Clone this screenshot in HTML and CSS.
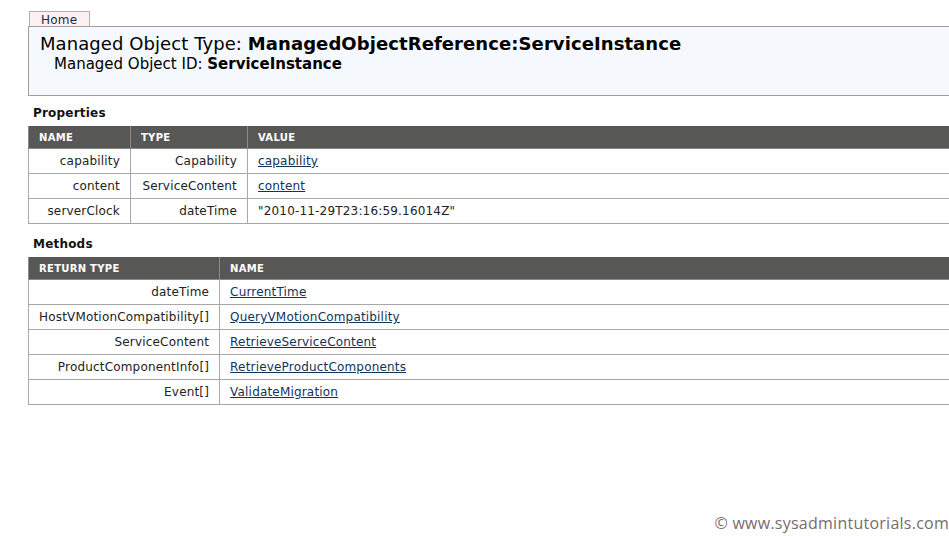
FILE: index.html
```html
<!DOCTYPE html>
<html>
<head>
<meta charset="utf-8">
<link rel="stylesheet" href="styles.css">
</head>
<body>
<div class="page">
  <div class="tabs"><a class="tab" href="#">Home</a></div>
  <div class="header">
    <div class="title">Managed Object Type: <b>ManagedObjectReference:ServiceInstance</b></div>
    <div class="subtitle">Managed Object ID: <b>ServiceInstance</b></div>
  </div>

  <h2 class="section">Properties</h2>
  <table class="grid props">
    <thead>
      <tr><th class="c-name">NAME</th><th class="c-type">TYPE</th><th>VALUE</th></tr>
    </thead>
    <tbody>
      <tr><td class="r">capability</td><td class="r">Capability</td><td><a href="#">capability</a></td></tr>
      <tr><td class="r">content</td><td class="r">ServiceContent</td><td><a href="#">content</a></td></tr>
      <tr><td class="r">serverClock</td><td class="r">dateTime</td><td>"2010-11-29T23:16:59.16014Z"</td></tr>
    </tbody>
  </table>

  <h2 class="section">Methods</h2>
  <table class="grid methods">
    <thead>
      <tr><th class="c-ret">RETURN TYPE</th><th>NAME</th></tr>
    </thead>
    <tbody>
      <tr><td class="r">dateTime</td><td><a href="#">CurrentTime</a></td></tr>
      <tr><td class="r">HostVMotionCompatibility[]</td><td><a href="#">QueryVMotionCompatibility</a></td></tr>
      <tr><td class="r">ServiceContent</td><td><a href="#">RetrieveServiceContent</a></td></tr>
      <tr><td class="r">ProductComponentInfo[]</td><td><a href="#">RetrieveProductComponents</a></td></tr>
      <tr><td class="r">Event[]</td><td><a href="#">ValidateMigration</a></td></tr>
    </tbody>
  </table>
</div>
<div class="watermark">© www.sysadmintutorials.com</div>
</body>
</html>
```

FILE: styles.css
```css
html, body {
  margin: 0;
  padding: 0;
  overflow: hidden;
  background: #ffffff;
}
body {
  font-family: "DejaVu Sans", Verdana, sans-serif;
  color: #111;
  width: 949px;
  height: 536px;
  position: relative;
}
.page {
  padding: 11px 0 0 28px;
  width: 960px;
}
.tabs {
  display: flex;
  padding-left: 1px;
}
.tab {
  display: block;
  width: 48px;
  height: 14px;
  padding: 0 0 0 11px;
  font-size: 12px;
  line-height: 16px;
  letter-spacing: 0.2px;
  color: #1a2a44;
  text-decoration: none;
  background: #fcf0f1;
  border: 1px solid #b0b0b0;
  border-bottom: none;
}
.header {
  height: 68px;
  background: #f5f8fd;
  border: 1px solid #a0a0a0;
  border-right: none;
  padding: 0 0 0 11px;
}
.title {
  font-size: 18px;
  line-height: 21px;
  margin-top: 6px;
  letter-spacing: 0.08px;
  color: #000;
}
.subtitle {
  font-size: 15px;
  line-height: 17px;
  margin: 2px 0 0 14px;
  color: #000;
}
.section {
  font-size: 12px;
  font-weight: bold;
  margin: 10px 0 5px 5px;
  line-height: 15px;
  letter-spacing: 0.2px;
  color: #111;
}
.grid {
  border-collapse: collapse;
  width: 960px;
  font-size: 12px;
  margin-bottom: 13px;
}
.grid th {
  background: #575856;
  color: #fff;
  font-size: 10px;
  font-weight: bold;
  letter-spacing: 0.3px;
  text-align: left;
  height: 22px;
  padding: 0 10px;
  border: 1px solid #8a8a8a;
  border-top: none;
}
.grid td {
  height: 24px;
  padding: 0 10px;
  border: 1px solid #a8a8a8;
  color: #222;
  white-space: nowrap;
  letter-spacing: 0.18px;
}
.grid td.r {
  text-align: right;
}
.grid a {
  color: #14325a;
}
.props .c-name { width: 81px; }
.props .c-type { width: 96px; }
.methods .c-ret { width: 170px; }
.watermark {
  position: absolute;
  right: 0;
  bottom: 2px;
  font-family: "Open Sans", "Noto Sans", sans-serif;
  font-size: 16px;
  color: #7a6b6b;
  letter-spacing: 0.25px;
}
```
